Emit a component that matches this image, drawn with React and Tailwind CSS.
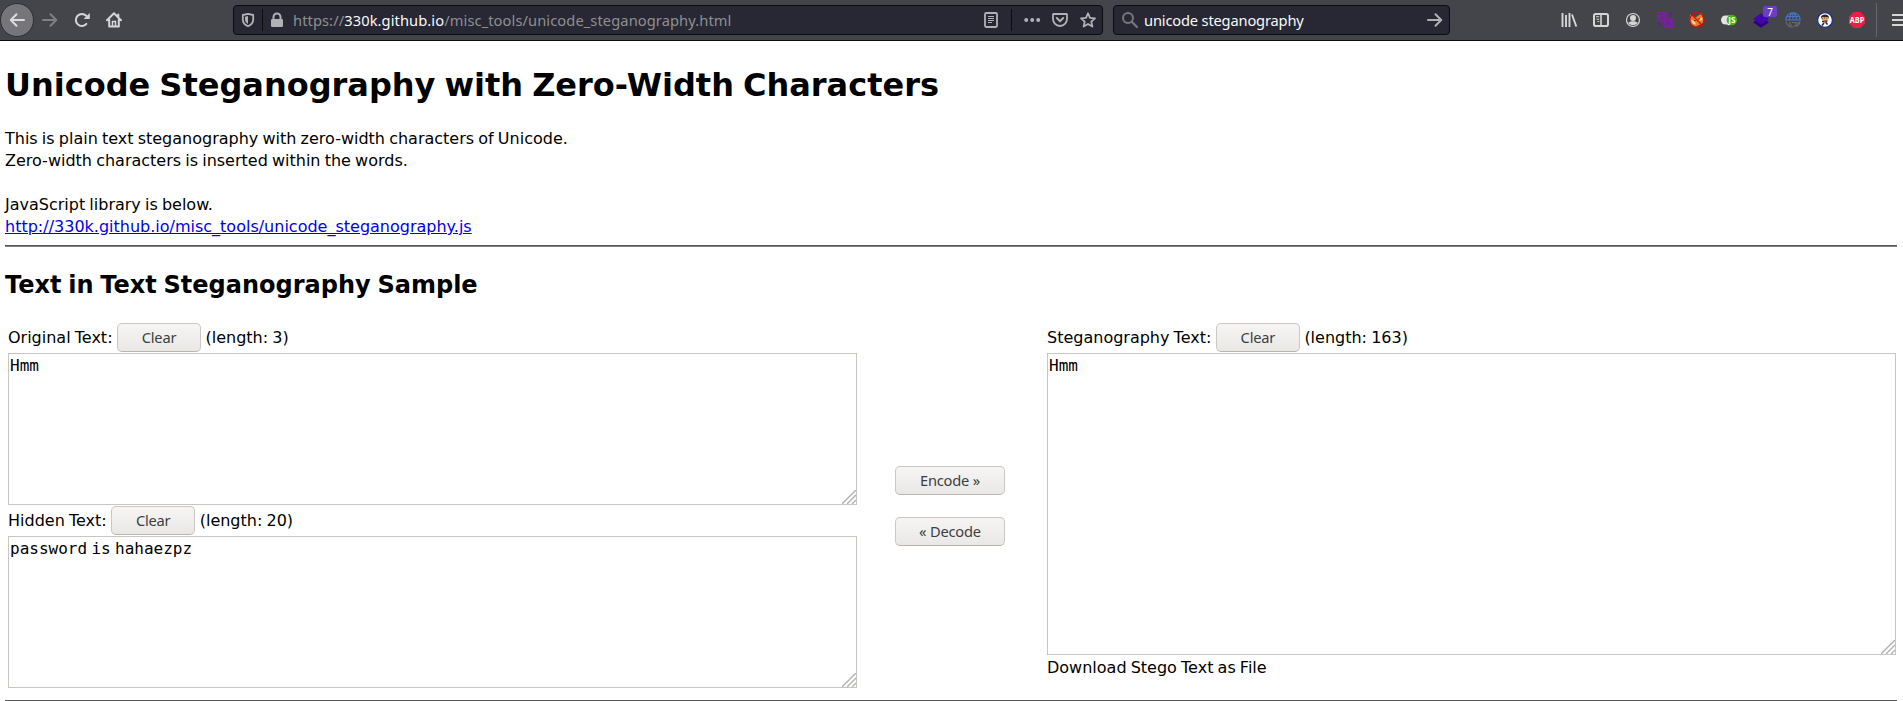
import React from "react";

function Btn({ children, className = "" }) {
  return (
    <button type="button" className={`inline-flex h-[29px] shrink-0 items-center justify-center rounded-[5px] border border-[#cbc7c2] border-b-[#b9b4ae] bg-linear-to-b from-[#f6f5f4] to-[#e9e8e7] font-['Noto_Sans',sans-serif] text-[14.67px] leading-none tracking-[-0.2px] text-[#3a3f42] [word-spacing:0px] ${className}`}>
      {children}
    </button>
  );
}

function Area({ text, className = "" }) {
  return (
    <div className={`relative w-[849px] border border-[#c9c5c0] bg-white pl-px pt-[2px] font-['DejaVu_Sans_Mono',monospace] text-[16px] leading-[19px] text-black ${className}`}>
      <span className="[word-spacing:-5.3px]">{text}</span>
      <svg className="absolute right-0 bottom-0" width="14" height="14" viewBox="0 0 14 14" stroke="#b0b0b0" strokeWidth="1.4" fill="none">
        <path d="M0 14 14 0M5 14l9-9M10 14l4-4" />
      </svg>
    </div>
  );
}

function Label({ name, len }) {
  return (
    <div className="flex h-[31px] items-center leading-[23px] whitespace-pre">
      <span>{name}:</span>
      <Btn className="mr-[4.5px] ml-[4.5px] w-[84px]">Clear</Btn>
      <span>(length: {len})</span>
    </div>
  );
}

function ToolIcon({ children }) {
  return (
    <svg width="16" height="16" viewBox="0 0 16 16" className="shrink-0 overflow-visible" fill="none">
      {children}
    </svg>
  );
}

function Extensions() {
  return (
    <div className="flex items-center gap-4">
      <ToolIcon><path d="M1.500 1v14M5 3v12M8.500 1v14M11 2.500 15.300 14.500" stroke="#d6d6d3" strokeWidth="1.900" /></ToolIcon>
      <ToolIcon><rect x="1" y="2" width="14" height="12" rx="1.800" stroke="#d6d6d3" strokeWidth="2" /><path d="M8 2v12" stroke="#d6d6d3" strokeWidth="1.600" /><path d="M3 4.800h3.200M3.500 7.200h2.700M4.500 9.500h1.700" stroke="#d6d6d3" strokeWidth="1.100" /></ToolIcon>
      <ToolIcon><circle cx="8" cy="8" r="6.500" stroke="#d6d6d3" strokeWidth="1.200" /><circle cx="8" cy="6" r="3" fill="#d6d6d3" /><path d="M3.200 10.500c1.200-.5 2.200-.6 2.800-1.300h4c.6.7 1.600.8 2.800 1.300C11.700 12.400 10 13.200 8 13.200s-3.700-.8-4.800-2.700z" fill="#d6d6d3" /></ToolIcon>
      <ToolIcon>
        <path d="M0 0h9.500v6.300H16V16H6.500V9.500H0z" fill="#7b1fa2" />
        <path d="M2 2.500h5.500M4.700 1.500v1M3 4.500c.5 2 2 3 4 3.500M6.500 4.500C6 6.500 4.500 7.500 2.500 8M9 14l2.500-6 2.500 6M10 12h3" stroke="#4c3960" strokeWidth=".9" />
        <path d="M15.500.5 12.500 2l2 2.500M1 11l2.500 1.500L1 14.500" stroke="#671d88" strokeWidth="1.200" />
      </ToolIcon>
      <ToolIcon>
        <path d="M1 2.500 4 4l3 1.200 2-1.400 4-2.800.5 3.800 1 4-1.500 3-3.500 1.500-3 1.500-4-2-2-4z" fill="#ef7d21" />
        <path d="m2 8 3.500 1 1.500 3.500-3-.5zM13.500 5.500l-3 1-.5 2.500 3-1z" fill="#f3d9b8" />
        <path d="m5 8.200 1.500.8M9.500 7.200l1.200-.7" stroke="#4b2a1c" strokeWidth="1.300" />
        <circle cx="8" cy="8" r="7.300" stroke="#cb1010" strokeWidth="1.300" /><path d="m3 2.800 10 10.400" stroke="#cb1010" strokeWidth="1.300" />
      </ToolIcon>
      <ToolIcon>
        <rect x="0" y="3.500" width="14" height="9" rx="4.500" fill="#e4e4e4" /><circle cx="10.800" cy="8" r="5.200" fill="#42b80f" />
        <text x="10.800" y="11" textAnchor="middle" fontFamily="Noto Sans" fontSize="8" fontWeight="700" fill="#fff">JS</text>
      </ToolIcon>
      <div className="relative size-4">
        <ToolIcon><path d="m0 10.200 8-5.500 8 5.500-8 5.600z" fill="#2b0080" /><path d="M0 7 8 1.300 16 7l-8 5.600z" fill="#4305ad" /></ToolIcon>
        <span className="absolute top-[-6px] left-[10px] flex h-[11px] w-[14px] items-center justify-center rounded-[2px] bg-[#6b3fc4] text-[10px] leading-none text-white">7</span>
      </div>
      <ToolIcon>
        <path d="M.8 8a7.200 7.200 0 0 1 14.400 0zM4.500 8c0-3 1.500-7.200 3.500-7.200S11.500 5 11.500 8M8 1v7M2 4.500h12" stroke="#4774c2" strokeWidth="1.200" />
        <path d="M1 9.500c.8 3.500 3.500 5.700 7 5.700M15 9.500c-.5 2.300-1.800 4-4 5M5 10v3h2M7 10.500h4V14H8.500M13 10v2" stroke="#656a73" strokeWidth="1.200" />
      </ToolIcon>
      <ToolIcon>
        <circle cx="8" cy="8" r="7.400" fill="#fff" stroke="#1c2f91" strokeWidth="1.200" />
        <path d="M4 4.800C5 2.500 8 1.800 10.500 3l1.500 2-1 2.500H5z" fill="#302621" /><path d="M5 5h6.500l-.7 3.200H6z" fill="#e8ad49" />
        <path d="M7 6h.8M9.500 6h.8" stroke="#302621" />
        <path d="m5 9.500 5.500-.5M8 9.500l2.500 3M7 11l-2 2.500" stroke="#302621" strokeWidth="1.600" /><path d="m7 9 2 1.500" stroke="#d43b2f" strokeWidth="1.500" />
      </ToolIcon>
      <ToolIcon>
        <path d="M4.700 0h6.600L16 4.700v6.600L11.300 16H4.700L0 11.300V4.700z" fill="#ed1e45" />
        <text x="8" y="10.900" textAnchor="middle" textLength="14.400" lengthAdjust="spacingAndGlyphs" fontFamily="Noto Sans" fontSize="8" fontWeight="700" fill="#fff">ABP</text>
      </ToolIcon>
    </div>
  );
}

function Toolbar() {
  return (
    <header className="flex h-[41px] items-center overflow-hidden border-b border-[#0c0c0d] bg-[#43454b] font-['Noto_Sans',sans-serif] text-[14.67px] [word-spacing:0px]">
      <div className="flex w-[233px] shrink-0 items-center">
        <div className="flex size-[34px] items-center justify-center rounded-full border border-[#2f3035] bg-[#75757a]">
          <ToolIcon><path d="M15 8H2M7.500 2.200 1.800 8l5.700 5.800" stroke="#dcdcdd" strokeWidth="2" strokeLinecap="round" strokeLinejoin="round" /></ToolIcon>
        </div>
        <div className="ml-[8px]"><ToolIcon><path d="M1 8h13M8.500 2.200 14.200 8l-5.700 5.800" stroke="#7f8084" strokeWidth="2" strokeLinecap="round" strokeLinejoin="round" /></ToolIcon></div>
        <div className="ml-4"><ToolIcon><path d="M12.400 11.900A6 6 0 1 1 12.200 3.800" stroke="#d6d6d7" strokeWidth="2" strokeLinecap="round" /><path d="M15.800 1v5.200a.7.7 0 0 1-.7.7H9.600z" fill="#d6d6d7" /></ToolIcon></div>
        <div className="ml-4"><ToolIcon><path d="M1 8.200 8 1.300l7 6.900M3.200 7.500V14.500h9.600V7.500M12.300 5V2.500" stroke="#d6d6d7" strokeWidth="2" strokeLinecap="round" strokeLinejoin="round" /><path d="M6.500 14V9.500h3v4.500" stroke="#d6d6d7" strokeWidth="1.500" /></ToolIcon></div>
      </div>
      <div className="flex h-[30px] w-[870px] shrink-0 items-center rounded-[4px] border border-[#0c0c0d] bg-[#272833]">
        <div className="ml-[6px]"><ToolIcon><path d="M8 1.800 13.200 3v4.500c0 3-2 5.400-5.200 6.800C4.800 12.900 2.800 10.500 2.800 7.500V3z" stroke="#b1b1b5" strokeWidth="1.800" strokeLinejoin="round" /><path d="M8 4v8C6 10.800 5 9.400 5 7.300V4.700z" fill="#b1b1b5" /></ToolIcon></div>
        <div className="ml-[6px] h-[22px] w-px bg-[#0c0c0d]" />
        <div className="ml-[6px]"><ToolIcon><rect x="2" y="7" width="12" height="8" rx="1.200" fill="#b1b1b5" /><path d="M4.500 8V5a3.500 3.500 0 0 1 7 0v3" stroke="#b1b1b5" strokeWidth="2" /></ToolIcon></div>
        <div className="ml-[8px] flex-1 leading-5 tracking-[0.09px] whitespace-pre text-[#8f8f93]">https://<span className="text-[#f9f9fa]">330k.github.io</span>/misc_tools/unicode_steganography.html</div>
        <ToolIcon><rect x="2" y="1" width="12" height="14" rx="1.200" stroke="#b1b1b5" strokeWidth="1.800" /><path d="M5 4.500h6M5 6.500h6M5 8.500h6M5 10.500h4" stroke="#b1b1b5" /></ToolIcon>
        <div className="ml-[12px] h-[22px] w-px bg-[#0c0c0d]" />
        <div className="ml-[12px]"><ToolIcon><circle cx="2.200" cy="8" r="2" fill="#b1b1b5" /><circle cx="8.200" cy="8" r="2" fill="#b1b1b5" /><circle cx="14.200" cy="8" r="2" fill="#b1b1b5" /></ToolIcon></div>
        <div className="ml-[12px]"><ToolIcon><path d="M1.500 2h13a.6.6 0 0 1 .5.6V7a7 7 0 0 1-14 0V2.600a.6.6 0 0 1 .5-.6z" stroke="#b1b1b5" strokeWidth="1.800" /><path d="M4.800 6 8 9.200 11.200 6" stroke="#b1b1b5" strokeWidth="2" strokeLinecap="round" strokeLinejoin="round" /></ToolIcon></div>
        <div className="mr-[6px] ml-[12px]"><ToolIcon><path d="m8 1.300 2 4.600 5 .5-3.700 3.300 1.100 4.900L8 12l-4.400 2.600 1.100-4.900L1 6.400l5-.5z" stroke="#b1b1b5" strokeWidth="1.800" strokeLinejoin="round" /></ToolIcon></div>
      </div>
      <div className="mr-[111px] ml-[10px] flex h-[30px] w-[337px] shrink-0 items-center rounded-[4px] border border-[#0c0c0d] bg-[#272833]">
        <div className="ml-[8px]"><ToolIcon><circle cx="6" cy="6" r="5" stroke="#77787e" strokeWidth="2" /><path d="m10 10 5 5" stroke="#77787e" strokeWidth="2.200" strokeLinecap="round" /></ToolIcon></div>
        <span className="ml-[6px] flex-1 tracking-[-0.17px] text-[#f9f9fa]">unicode steganography</span>
        <div className="mr-[6px]"><ToolIcon><path d="M1 8h13M8.500 2.200 14.200 8l-5.700 5.800" stroke="#b1b1b5" strokeWidth="2" strokeLinecap="round" strokeLinejoin="round" /></ToolIcon></div>
      </div>
      <Extensions />
      <div className="ml-[11px] h-[34px] w-px shrink-0 bg-[#66686d]" />
      <div className="ml-[15px]"><ToolIcon><path d="M0 3h16M0 8h16M0 13h16" stroke="#d6d6d3" strokeWidth="2" /></ToolIcon></div>
    </header>
  );
}

export default function App() {
  return (
    <div className="h-[701px] w-full overflow-hidden bg-white font-['DejaVu_Sans',sans-serif] text-[16px] leading-[22px] text-black [word-spacing:-0.93px]">
      <Toolbar />
      <main className="pr-[6px] pl-[5px]">
        <h1 className="pt-[25px] text-[32px] leading-[38px] font-bold [word-spacing:-2.1px]">Unicode Steganography with Zero-Width Characters</h1>
        <p className="pt-[24px]">This is plain text steganography with zero-width characters of Unicode.<br />Zero-width characters is inserted within the words.<br /><br />JavaScript library is below.<br /><a className="text-[#0000ee] underline">http://330k.github.io/misc_tools/unicode_steganography.js</a></p>
        <div className="mt-[7px] h-[2px] border-t border-b border-t-[#555555] border-b-[#808080]" />
        <h2 className="pt-[24px] text-[24px] leading-[28px] font-bold [word-spacing:-1.55px]">Text in Text Steganography Sample</h2>
        <div className="flex h-[389px] pt-[23px] pl-[3px]">
          <section className="w-[849px]">
            <Label name="Original Text" len="3" />
            <Area text="Hmm" className="h-[152px]" />
            <Label name="Hidden Text" len="20" />
            <Area text="password is hahaezpz" className="h-[152px]" />
          </section>
          <div className="flex w-[190px] flex-col gap-[22px] pt-[144px] pl-[38px]">
            <Btn className="w-[110px]">Encode »</Btn>
            <Btn className="w-[110px]">« Decode</Btn>
          </div>
          <section className="w-[849px]">
            <Label name="Steganography Text" len="163" />
            <Area text="Hmm" className="h-[302px]" />
            <div className="pt-[2px]">Download Stego Text as File</div>
          </section>
        </div>
        <div className="mt-[12px] h-[2px] bg-[#555555]" />
      </main>
    </div>
  );
}
